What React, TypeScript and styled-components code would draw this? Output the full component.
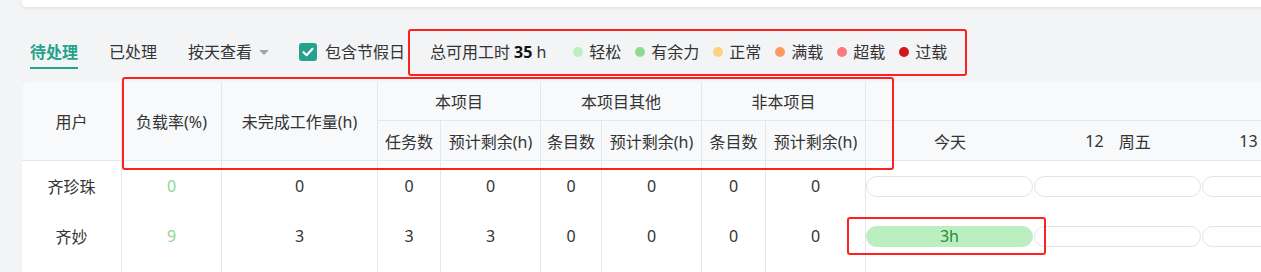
import React from "react";
import styled, { createGlobalStyle } from "styled-components";

const GlobalStyle = createGlobalStyle`
  html, body { margin: 0; padding: 0; background: #f3f4f6; }
  body {
    font-family: "Noto Sans", "Noto Sans CJK SC", sans-serif;
    color: #333;
  }
  * { box-sizing: border-box; }
`;

const TEAL = "#26a18b";
const LINE = "#e3e7ee";

const Page = styled.div`
  position: relative;
  width: 1261px;
  height: 272px;
  overflow: hidden;
  background: #f3f4f6;
  padding-left: 22px;
`;

const TopCard = styled.div`
  height: 7px;
  width: 1300px;
  background: #fff;
  border-bottom-left-radius: 4px;
  box-shadow: 0 1px 4px rgba(0, 0, 0, 0.09);
`;

const Toolbar = styled.div`
  margin-top: 22px;
  height: 46px;
  display: flex;
  align-items: center;
  padding-left: 8px;
  font-size: 16px;
  white-space: nowrap;
`;

const Tab = styled.div<{ $active?: boolean }>`
  padding: 6px 0 4px;
  line-height: 22px;
  margin-right: 31px;
  color: ${(p) => (p.$active ? TEAL : "#333")};
  font-weight: ${(p) => (p.$active ? 700 : 400)};
  border-bottom: 2px solid ${(p) => (p.$active ? TEAL : "transparent")};
`;

const Dropdown = styled.div`
  display: flex;
  align-items: center;
  margin-right: 30px;
  line-height: 22px;
`;

const Caret = styled.span`
  width: 0;
  height: 0;
  margin-left: 7px;
  border-left: 5px solid transparent;
  border-right: 5px solid transparent;
  border-top: 5px solid #a3a3a3;
`;

const CheckLabel = styled.label`
  display: flex;
  align-items: center;
  gap: 8px;
  line-height: 22px;
`;

const CheckBox = styled.span`
  width: 18px;
  height: 18px;
  border-radius: 3px;
  background: ${TEAL};
  display: flex;
  align-items: center;
  justify-content: center;
`;

const Legend = styled.div`
  display: flex;
  align-items: center;
  margin-left: 25px;
  line-height: 22px;
`;

const Total = styled.span`
  margin-right: 27px;
  b {
    font-weight: 700;
    color: #111;
    margin: 0 4px;
  }
`;

const LegendItem = styled.span`
  display: flex;
  align-items: center;
  margin-right: 14px;
`;

const Dot = styled.span<{ $color: string }>`
  width: 10px;
  height: 10px;
  border-radius: 50%;
  background: ${(p) => p.$color};
  margin-right: 6px;
`;

const TableCard = styled.div`
  margin-top: 7px;
  width: 1400px;
  height: 200px;
  background: #fff;
  border-top-left-radius: 8px;
  overflow: hidden;
  display: grid;
  grid-template-columns: 100px 100px 156px 63px 100px 61px 100px 64px 100px 504px;
  grid-template-rows: 39px 40px 50px 50px 1fr;
  font-size: 16px;
`;

type CellProps = {
  $col: number;
  $row: number;
  $colSpan?: number;
  $rowSpan?: number;
  $noRight?: boolean;
};

const HeadCell = styled.div<CellProps>`
  grid-column: ${(p) => `${p.$col} / span ${p.$colSpan ?? 1}`};
  grid-row: ${(p) => `${p.$row} / span ${p.$rowSpan ?? 1}`};
  background: #f8f9fb;
  border-right: ${(p) => (p.$noRight ? "none" : `1px solid ${LINE}`)};
  border-bottom: 1px solid ${LINE};
  display: flex;
  align-items: center;
  justify-content: center;
  white-space: nowrap;
  color: #333;
`;

const Cell = styled.div<CellProps & { $tone?: string }>`
  grid-column: ${(p) => `${p.$col} / span ${p.$colSpan ?? 1}`};
  grid-row: ${(p) => `${p.$row} / span ${p.$rowSpan ?? 1}`};
  border-right: ${(p) => (p.$noRight ? "none" : `1px solid ${LINE}`)};
  display: flex;
  align-items: center;
  justify-content: center;
  white-space: nowrap;
  color: ${(p) => p.$tone ?? "#333"};
`;

const DayHeads = styled.div`
  display: flex;
  width: 100%;
  height: 100%;
`;

const DayHead = styled.div<{ $shift?: number }>`
  width: 168px;
  flex: none;
  display: flex;
  align-items: center;
  justify-content: center;
  gap: 15px;
  padding-right: ${(p) => p.$shift ?? 0}px;
`;

const BarTrack = styled.div`
  display: flex;
  width: 100%;
  justify-content: flex-start;
`;

const Bar = styled.div<{ $fill?: boolean }>`
  width: 167px;
  height: 21px;
  margin-right: 1px;
  flex: none;
  border-radius: 11px;
  border: 1px solid ${(p) => (p.$fill ? "#bbefc0" : "#dfe4ec")};
  background: ${(p) => (p.$fill ? "#bbefc0" : "#fff")};
  color: #2c8a3c;
  font-size: 16px;
  display: flex;
  align-items: center;
  justify-content: center;
`;

const Mark = styled.div<{ $x: number; $y: number; $w: number; $h: number }>`
  position: absolute;
  left: ${(p) => p.$x}px;
  top: ${(p) => p.$y}px;
  width: ${(p) => p.$w}px;
  height: ${(p) => p.$h}px;
  border: 2px solid #ff2020;
  border-radius: 3px;
  pointer-events: none;
`;

const legend = [
  { label: "轻松", color: "#bdeec2" },
  { label: "有余力", color: "#8edb8f" },
  { label: "正常", color: "#ffd27f" },
  { label: "满载", color: "#ff9a5e" },
  { label: "超载", color: "#ff7b7b" },
  { label: "过载", color: "#d3161c" },
];

type Row = {
  name: string;
  load: number;
  left: number;
  vals: number[];
  bars: (string | null)[];
};

const rows: Row[] = [
  { name: "齐珍珠", load: 0, left: 0, vals: [0, 0, 0, 0, 0, 0], bars: [null, null, null] },
  { name: "齐妙", load: 9, left: 3, vals: [3, 3, 0, 0, 0, 0], bars: ["3h", null, null] },
];

export default function App() {
  return (
    <Page>
      <GlobalStyle />
      <TopCard />
      <Toolbar>
        <Tab $active>待处理</Tab>
        <Tab>已处理</Tab>
        <Dropdown>
          按天查看
          <Caret />
        </Dropdown>
        <CheckLabel>
          <CheckBox>
            <svg width="14" height="14" viewBox="0 0 14 14">
              <polyline
                points="2.5,7.2 5.6,10.2 11.5,3.8"
                fill="none"
                stroke="#fff"
                strokeWidth="2.2"
                strokeLinecap="round"
                strokeLinejoin="round"
              />
            </svg>
          </CheckBox>
          包含节假日
        </CheckLabel>
        <Legend>
          <Total>
            总可用工时<b>35</b>h
          </Total>
          {legend.map((l) => (
            <LegendItem key={l.label}>
              <Dot $color={l.color} />
              {l.label}
            </LegendItem>
          ))}
        </Legend>
      </Toolbar>

      <TableCard>
        <HeadCell $col={1} $row={1} $rowSpan={2}>用户</HeadCell>
        <HeadCell $col={2} $row={1} $rowSpan={2}>负载率(%)</HeadCell>
        <HeadCell $col={3} $row={1} $rowSpan={2}>未完成工作量(h)</HeadCell>
        <HeadCell $col={4} $row={1} $colSpan={2}>本项目</HeadCell>
        <HeadCell $col={6} $row={1} $colSpan={2}>本项目其他</HeadCell>
        <HeadCell $col={8} $row={1} $colSpan={2}>非本项目</HeadCell>
        <HeadCell $col={10} $row={1} $noRight />
        <HeadCell $col={4} $row={2}>任务数</HeadCell>
        <HeadCell $col={5} $row={2}>预计剩余(h)</HeadCell>
        <HeadCell $col={6} $row={2}>条目数</HeadCell>
        <HeadCell $col={7} $row={2}>预计剩余(h)</HeadCell>
        <HeadCell $col={8} $row={2}>条目数</HeadCell>
        <HeadCell $col={9} $row={2}>预计剩余(h)</HeadCell>
        <HeadCell $col={10} $row={2} $noRight>
          <DayHeads>
            <DayHead>今天</DayHead>
            <DayHead>
              <span>12</span>
              <span>周五</span>
            </DayHead>
            <DayHead $shift={28}>
              <span>13</span>
              <span>周六</span>
            </DayHead>
          </DayHeads>
        </HeadCell>

        {rows.map((r, i) => {
          const row = 3 + i;
          return (
            <React.Fragment key={r.name}>
              <Cell $col={1} $row={row}>{r.name}</Cell>
              <Cell $col={2} $row={row} $tone="#8cd78e">{r.load}</Cell>
              <Cell $col={3} $row={row}>{r.left}</Cell>
              {r.vals.map((v, j) => (
                <Cell key={j} $col={4 + j} $row={row}>{v}</Cell>
              ))}
              <Cell $col={10} $row={row} $noRight>
                <BarTrack>
                  {r.bars.map((b, k) => (
                    <Bar key={k} $fill={!!b}>{b}</Bar>
                  ))}
                </BarTrack>
              </Cell>
            </React.Fragment>
          );
        })}
        {Array.from({ length: 9 }).map((_, j) => (
          <Cell key={`f${j}`} $col={1 + j} $row={5} />
        ))}
      </TableCard>

      <Mark $x={408} $y={29} $w={559} $h={47} />
      <Mark $x={122} $y={77} $w={772} $h={93} />
      <Mark $x={847} $y={217} $w={199} $h={38} />
    </Page>
  );
}
